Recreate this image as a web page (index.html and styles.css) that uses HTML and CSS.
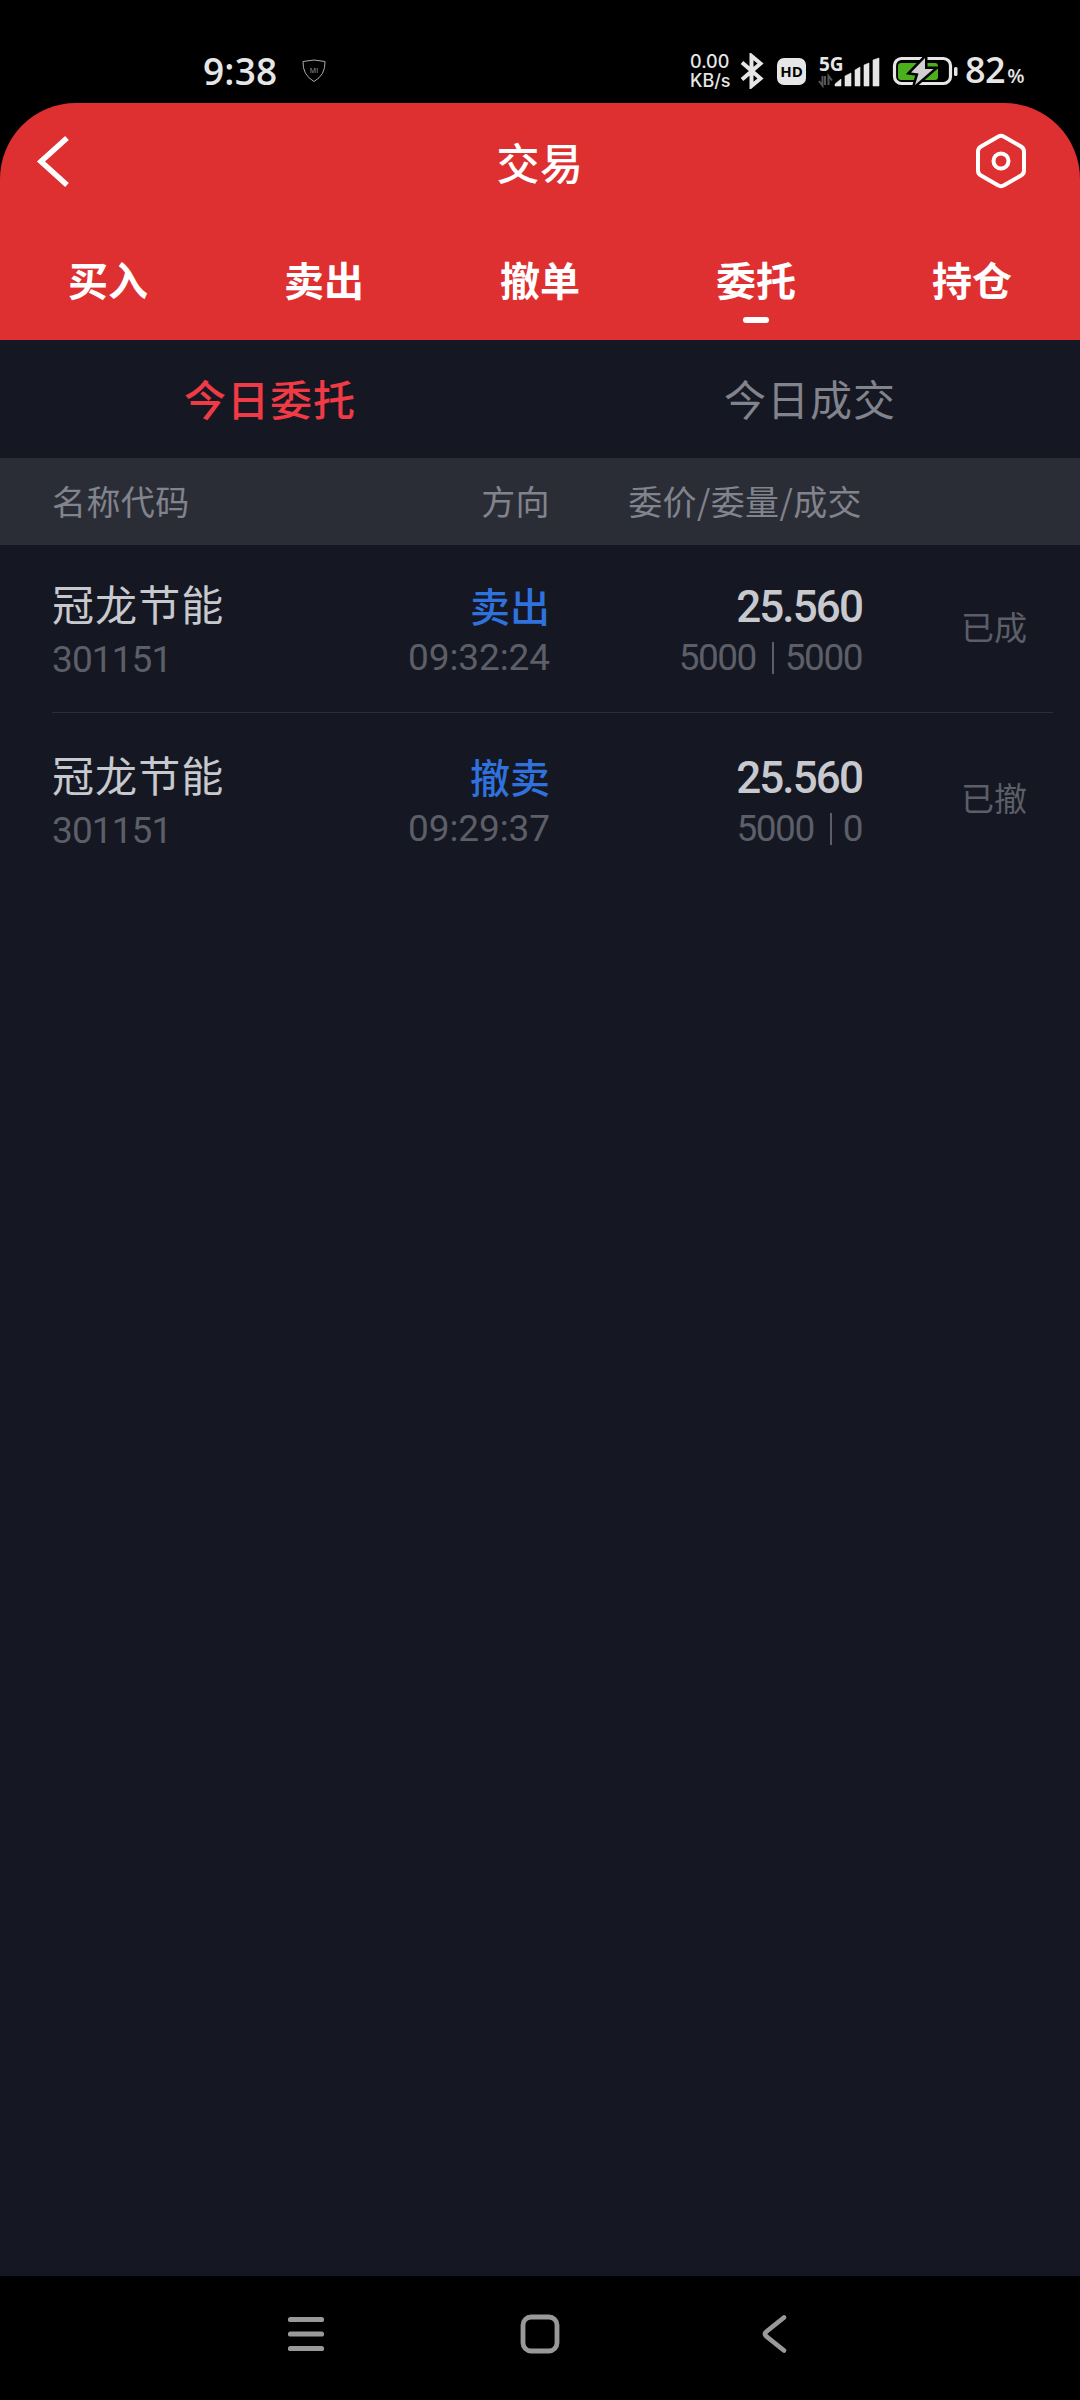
FILE: index.html
```html
<!DOCTYPE html>
<html lang="zh-CN">
<head>
    <meta charset="UTF-8">
    <title>交易</title>
    <link rel="stylesheet" href="styles.css">
</head>
<body>
<div class="status-bar">
    <span class="clock">9:38</span>
    <svg class="shield" width="24" height="24" viewBox="0 0 24 24">
        <path d="M1 2.5Q12-.5 23 2.5Q23.500 16 12 22.500Q.5 16 1 2.500Z" fill="none" stroke="#aaa" stroke-width="1"/>
        <text x="12" y="14" text-anchor="middle" font-size="7" fill="#aaa">MI</text>
    </svg>
    <div class="speed"><span>0.00</span><span>KB/s</span></div>
    <svg class="bluetooth" width="24" height="36" viewBox="0 0 24 36">
        <path d="M2 9.500L20.500 25.500L11.500 33V3L20.500 10.500L2 26.500" fill="none" stroke="#e6e6e6" stroke-width="4"/>
    </svg>
    <span class="hd">HD</span>
    <svg class="signal" width="62" height="44" viewBox="0 -6 62 44">
        <text x="1" y="15.500" class="net">5G</text>
        <path d="M4.500 21V30.500L1 26M7 30V21M10.500 30V21L14 25.500" fill="none" stroke="#555" stroke-width="2"/>
        <path d="M17 31V29L23 24V31ZM27 31V21L33 18V31ZM37 31V15L42 12V31ZM46 31V10L51 8V31ZM55 31V5L61 3V31Z" fill="#e6e6e6" stroke="#e6e6e6" stroke-width=".6" stroke-linejoin="round"/>
    </svg>
    <svg class="battery" width="67" height="32" viewBox="0 0 67 32">
        <rect x="2.500" y="3.500" width="56" height="25" rx="7" fill="none" stroke="#e6e6e6" stroke-width="3.200"/>
        <rect x="6" y="8" width="40" height="17" rx="3" fill="#4caf1c"/>
        <rect x="62" y="12" width="3.500" height="9" rx="1.500" fill="#e6e6e6"/>
        <path d="M33 3L19 17.500L26.500 18.500L23 30L41.500 14H33Z" fill="#d0d0d0" stroke="#000" stroke-width="5" paint-order="stroke"/>
    </svg>
    <span class="percent">82<small>%</small></span>
</div>

<div class="header">
    <div class="title-bar">
        <svg width="36" height="58" viewBox="0 0 36 58">
            <path d="M31 6L5 29.500L31 53" fill="none" stroke="#fff" stroke-width="5.500"/>
        </svg>
        <h1>交易</h1>
        <svg width="52" height="58" viewBox="0 0 52 58">
            <path d="M23 4.700Q26 3 29 4.700L46 14.500Q49 16.200 49 19.500V38.500Q49 41.800 46 43.500L29 53.300Q26 55 23 53.300L6 43.500Q3 41.800 3 38.500V19.500Q3 16.200 6 14.500Z" fill="none" stroke="#fff" stroke-width="4"/>
            <circle cx="26" cy="29" r="7.500" fill="none" stroke="#fff" stroke-width="4"/>
        </svg>
    </div>
    <div class="tabs">
        <a class="tab">买入</a>
        <a class="tab">卖出</a>
        <a class="tab">撤单</a>
        <a class="tab active">委托</a>
        <a class="tab">持仓</a>
    </div>
</div>

<div class="sub-tabs">
    <a class="sub-tab active">今日委托</a>
    <a class="sub-tab">今日成交</a>
</div>

<div class="table-head">
    <span>名称代码</span>
    <span class="right">方向</span>
    <span class="right">委价/委量/成交</span>
</div>

<div class="list">
    <div class="row">
        <div>
            <div class="name">冠龙节能</div>
            <div class="num">301151</div>
        </div>
        <div class="right">
            <div class="side">卖出</div>
            <div class="num time">09:32:24</div>
        </div>
        <div class="right">
            <div class="price">25.560</div>
            <div class="num volume"><span>5000</span><i></i><span>5000</span></div>
        </div>
        <div class="state">已成</div>
    </div>
    <div class="row">
        <div>
            <div class="name">冠龙节能</div>
            <div class="num">301151</div>
        </div>
        <div class="right">
            <div class="side">撤卖</div>
            <div class="num time">09:29:37</div>
        </div>
        <div class="right">
            <div class="price">25.560</div>
            <div class="num volume"><span>5000</span><i></i><span>0</span></div>
        </div>
        <div class="state">已撤</div>
    </div>
</div>

<div class="nav-bar">
    <svg width="40" height="40" viewBox="0 0 40 40">
        <path d="M4.500 5.500H35.500M4.500 20H35.500M4.500 34.500H35.500" stroke="#999" stroke-width="5.200" stroke-linecap="round"/>
    </svg>
    <svg width="40" height="40" viewBox="0 0 40 40">
        <rect x="3" y="3" width="34" height="34" rx="8" fill="none" stroke="#999" stroke-width="4.800"/>
    </svg>
    <svg width="40" height="40" viewBox="0 0 40 40">
        <path d="M29 3.500L11.500 17.500Q8.500 20 11.500 22.500L29 36.500" fill="none" stroke="#999" stroke-width="4.800" stroke-linecap="round"/>
    </svg>
</div>
</body>
</html>
```
FILE: styles.css
```css
* {
    box-sizing: border-box;
}

body {
    margin: 0;
    width: 1080px;
    height: 2400px;
    display: flex;
    flex-direction: column;
    background: #000;
    color: #c8c9cf;
    font-family: "Noto Sans CJK SC", sans-serif;
}

svg {
    display: block;
    flex: none;
}

/* system status bar */
.status-bar {
    display: flex;
    align-items: center;
    height: 103px;
    padding: 39px 0 0 203px;
    color: #e6e6e6;
    font-family: "Open Sans", sans-serif;
}

.clock {
    width: 99px;
    font-size: 37px;
    font-weight: 600;
    line-height: 40px;
    letter-spacing: 0.2px;
}

.shield {
    margin-right: 364px;
}

.speed {
    display: flex;
    flex-direction: column;
    width: 50px;
    font-family: Inter, sans-serif;
    font-size: 18px;
    font-weight: 500;
    line-height: 19px;
}

.bluetooth {
    margin-right: 13px;
}

.hd {
    width: 29px;
    height: 27px;
    margin-right: 12px;
    border-radius: 7px;
    background: #e6e6e6;
    color: #000;
    font-size: 15px;
    font-weight: 700;
    line-height: 27px;
    text-align: center;
}

.net {
    fill: #e6e6e6;
    font-size: 19px;
    font-weight: 700;
}

.battery {
    margin-left: 12px;
}

.percent {
    margin-left: 6px;
    padding-top: 4px;
    font-size: 36px;
    font-weight: 600;
    line-height: 40px;
    letter-spacing: -0.5px;
}

.percent small {
    margin-left: 2px;
    font-size: 20px;
}

/* red header */
.header {
    height: 237px;
    border-radius: 76px 76px 0 0;
    background: #df3031;
    color: #fff;
}

.title-bar {
    display: flex;
    align-items: center;
    justify-content: space-between;
    height: 115px;
    padding: 0 53px 0 36px;
}

h1 {
    margin: 0 0 0 33px;
    font-size: 43px;
    font-weight: 500;
    letter-spacing: 0.6px;
}

.tabs {
    display: flex;
    height: 122px;
}

.tab {
    flex: 1;
    display: flex;
    flex-direction: column;
    align-items: center;
    padding-top: 31px;
    font-size: 40px;
    font-weight: 700;
    line-height: 60px;
}

.tab.active::after {
    content: "";
    width: 26px;
    height: 6px;
    margin-top: 8px;
    border-radius: 3px;
    background: #fff;
}

.sub-tabs {
    display: flex;
    height: 118px;
    background: #151822;
}

.sub-tab {
    flex: 1;
    text-align: center;
    font-size: 42px;
    line-height: 116px;
    letter-spacing: 1px;
    color: #81838d;
}

.sub-tab.active {
    color: #f03a45;
    font-weight: 500;
}

/* order list */
.table-head,
.row {
    display: grid;
    grid-template-columns: 248px 250px 312px 165px;
    padding-left: 52px;
}

.table-head {
    height: 87px;
    background: #2b2d36;
    color: #81838d;
    font-size: 34px;
    line-height: 86px;
    letter-spacing: 0.4px;
}

.right {
    text-align: right;
}

.list {
    flex: 1;
    background: #151822;
}

.row {
    position: relative;
    height: 171px;
    padding-top: 28px;
}

.row:first-child::after {
    content: "";
    position: absolute;
    left: 52px;
    right: 27px;
    bottom: 3px;
    height: 1px;
    background: #2c2e37;
}

.name {
    font-size: 42px;
    line-height: 60px;
    letter-spacing: 1.1px;
}

.num {
    margin-top: 7px;
    font-family: Roboto, sans-serif;
    font-size: 37px;
    line-height: 40px;
    letter-spacing: -0.9px;
    color: #5c5e68;
}

.side {
    margin-top: 2px;
    font-size: 40px;
    font-weight: 500;
    line-height: 60px;
    color: #2f72dd;
}

.right .num {
    margin-top: 3px;
}

.right .time {
    letter-spacing: -0.1px;
}

.price {
    margin-top: 4px;
    margin-bottom: 1px;
    font-family: Roboto, sans-serif;
    font-size: 44px;
    font-weight: 500;
    line-height: 60px;
    letter-spacing: -1.9px;
}

.right .volume {
    display: flex;
    justify-content: flex-end;
    align-items: center;
    margin-top: 0;
    letter-spacing: -1.5px;
}

.volume i {
    width: 2px;
    height: 32px;
    margin: 0 11px 0 16px;
    background: #5c5e68;
}

.state {
    padding-top: 23px;
    text-align: right;
    font-size: 33px;
    line-height: 60px;
    color: #5c5e68;
}

/* system navigation */
.nav-bar {
    display: flex;
    justify-content: space-between;
    height: 124px;
    padding: 38px 285px 0 286px;
    background: #000;
}

.nav-bar svg:nth-child(2) {
    margin-right: 2px;
}
```
